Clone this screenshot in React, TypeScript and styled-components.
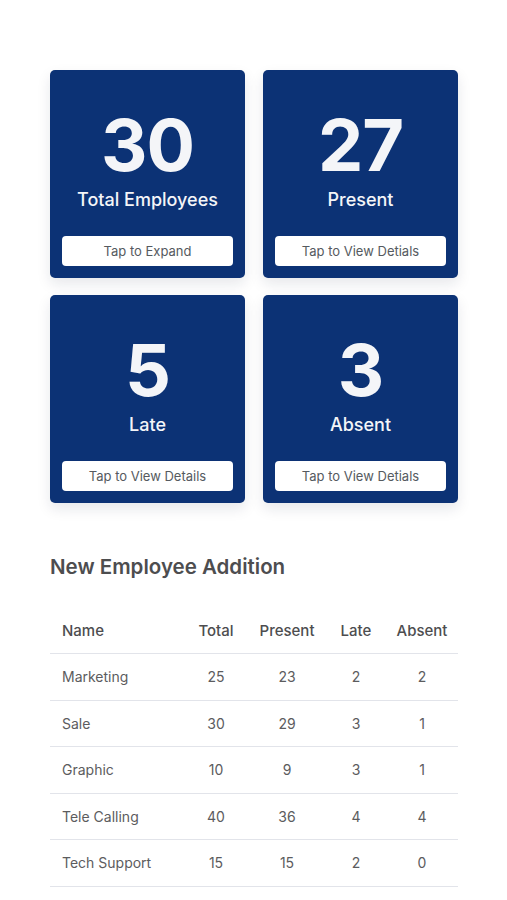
import React from 'react'
import styled, { createGlobalStyle } from 'styled-components'

type Stat = { value: number; label: string; action: string }
type Row = { name: string; total: number; present: number; late: number; absent: number }

const stats: Stat[] = [
  { value: 30, label: 'Total Employees', action: 'Tap to Expand' },
  { value: 27, label: 'Present', action: 'Tap to View Detials' },
  { value: 5, label: 'Late', action: 'Tap to View Details' },
  { value: 3, label: 'Absent', action: 'Tap to View Detials' },
]

const rows: Row[] = [
  { name: 'Marketing', total: 25, present: 23, late: 2, absent: 2 },
  { name: 'Sale', total: 30, present: 29, late: 3, absent: 1 },
  { name: 'Graphic', total: 10, present: 9, late: 3, absent: 1 },
  { name: 'Tele Calling', total: 40, present: 36, late: 4, absent: 4 },
  { name: 'Tech Support', total: 15, present: 15, late: 2, absent: 0 },
]

const GlobalStyle = createGlobalStyle`
  body {
    margin: 0;
    background: #ffffff;
    font-family: Inter, 'Open Sans', sans-serif;
  }
`

function StatCard({ stat }: { stat: Stat }) {
  return (
    <Card>
      <Value>{stat.value}</Value>
      <Label>{stat.label}</Label>
      <Action>{stat.action}</Action>
    </Card>
  )
}

export default function App() {
  return (
    <>
      <GlobalStyle />
      <Page>
        <Cards>
          {stats.map((s) => (
            <StatCard key={s.label} stat={s} />
          ))}
        </Cards>

        <Heading>New Employee Addition</Heading>

        <Table>
          <HeadRow>
            <Cell $left>Name</Cell>
            <Cell>Total</Cell>
            <Cell>Present</Cell>
            <Cell>Late</Cell>
            <Cell>Absent</Cell>
          </HeadRow>
          {rows.map((r) => (
            <BodyRow key={r.name}>
              <Cell $left>{r.name}</Cell>
              <Cell>{r.total}</Cell>
              <Cell>{r.present}</Cell>
              <Cell>{r.late}</Cell>
              <Cell>{r.absent}</Cell>
            </BodyRow>
          ))}
        </Table>
      </Page>
    </>
  )
}

const Page = styled.div`
  padding: 70px 49px 14px 50px;
`

const Cards = styled.div`
  display: grid;
  grid-template-columns: 1fr 1fr;
  gap: 17px 18px;
`

const Card = styled.div`
  height: 208px;
  box-sizing: border-box;
  background: #0c3275;
  border-radius: 5px;
  box-shadow: 0 6px 14px rgba(20, 30, 60, 0.1);
  display: flex;
  flex-direction: column;
  align-items: center;
  padding: 39px 12px 12px;
  color: #f4f5f8;
`

const Value = styled.div`
  font-size: 72px;
  font-weight: 700;
  line-height: 72px;
  letter-spacing: -1px;
`

const Label = styled.div`
  margin-top: 8px;
  font-size: 18px;
  font-weight: 500;
`

const Action = styled.div`
  margin-top: auto;
  width: 100%;
  height: 30px;
  border-radius: 4px;
  background: #ffffff;
  color: #555a60;
  font-size: 13px;
  display: flex;
  align-items: center;
  justify-content: center;
`

const Heading = styled.h2`
  margin: 51px 0 0;
  font-size: 20.5px;
  font-weight: 600;
  color: #4d4d4f;
`

const Table = styled.div`
  margin-top: 30px;
`

const columns = `grid-template-columns: 134px 64px 78px 60px 72px;`

const HeadRow = styled.div`
  display: grid;
  ${columns}
  height: 45px;
  box-sizing: border-box;
  padding-bottom: 2px;
  align-items: center;
  border-bottom: 1.5px solid #e2e4ea;
  font-size: 15px;
  font-weight: 500;
  color: #4d4d4f;
`

const BodyRow = styled.div`
  display: grid;
  ${columns}
  height: 46.5px;
  box-sizing: border-box;
  align-items: center;
  border-bottom: 1.5px solid #e2e4ea;
  font-size: 14px;
  color: #5c5c5e;
`

const Cell = styled.div<{ $left?: boolean }>`
  text-align: ${({ $left }) => ($left ? 'left' : 'center')};
  padding-left: ${({ $left }) => ($left ? '12px' : '0')};
`
